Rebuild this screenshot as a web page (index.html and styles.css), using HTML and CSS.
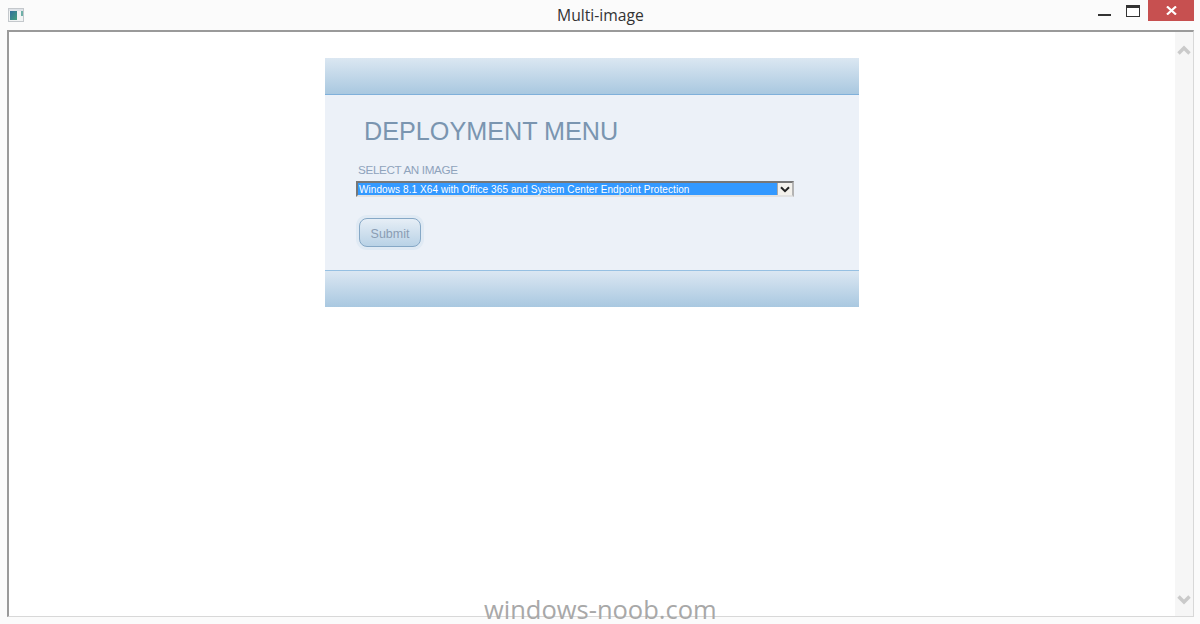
FILE: index.html
```html
<!DOCTYPE html>
<html lang="en">
<head>
<meta charset="utf-8">
<title>Multi-image</title>
<link rel="stylesheet" href="styles.css">
</head>
<body>
<div class="window">
  <header class="titlebar">
    <svg class="app-icon" width="16" height="14" viewBox="0 0 16 14">
      <rect x="0.5" y="0.5" width="15" height="13" fill="#f2f4f4" stroke="#c4c8cc"/>
      <rect x="1" y="1" width="14" height="2" fill="#dfe3e8"/>
      <defs><linearGradient id="ic" x1="0" y1="0" x2="1" y2="1"><stop offset="0" stop-color="#2f6f9c"/><stop offset="1" stop-color="#45a07e"/></linearGradient></defs>
      <rect x="2" y="3" width="7" height="9" fill="url(#ic)"/>
      <rect x="13" y="3" width="2" height="5" fill="#6fb0a8"/>
    </svg>
    <span class="title">Multi-image</span>
    <div class="controls">
      <svg class="ctl-min" width="13" height="2" viewBox="0 0 13 2"><rect width="13" height="2" fill="#333"/></svg>
      <svg class="ctl-max" width="14" height="12" viewBox="0 0 14 12"><rect x="0.5" y="0.5" width="13" height="11" fill="#fff" stroke="#333"/><rect x="0" y="0" width="14" height="3" fill="#333"/></svg>
      <div class="ctl-close">
        <svg width="11" height="9" viewBox="0 0 11 9"><path d="M1 0.5 L10 8.5 M10 0.5 L1 8.5" stroke="#fff" stroke-width="2.2" fill="none"/></svg>
      </div>
    </div>
  </header>
  <div class="frame">
    <main class="content">
      <section class="card">
        <div class="band band-top"></div>
        <div class="card-body">
          <h1 class="heading">DEPLOYMENT MENU</h1>
          <div class="label">SELECT AN IMAGE</div>
          <div class="select">
            <span class="select-value">Windows 8.1 X64 with Office 365 and System Center Endpoint Protection</span>
            <span class="select-arrow">
              <svg width="10" height="7" viewBox="0 0 10 7"><path d="M1 1.2 L5 5.2 L9 1.2" stroke="#222" stroke-width="2" fill="none"/></svg>
            </span>
          </div>
          <div class="button-ring"><div class="button">Submit</div></div>
        </div>
        <div class="band band-bottom"></div>
      </section>
    </main>
    <aside class="scrollbar">
      <svg width="14" height="10" viewBox="0 0 14 10"><path d="M1.5 8.5 L7 3 L12.5 8.5" stroke="#cacaca" stroke-width="3.4" fill="none"/></svg>
      <svg width="14" height="10" viewBox="0 0 14 10"><path d="M1.5 1.5 L7 7 L12.5 1.5" stroke="#cacaca" stroke-width="3.4" fill="none"/></svg>
    </aside>
  </div>
  <div class="watermark">windows-noob.com</div>
</div>
</body>
</html>
```
FILE: styles.css
```css
html, body {
  margin: 0;
  padding: 0;
}
body {
  width: 1200px;
  height: 624px;
  overflow: hidden;
  background: #fbfbfb;
  font-family: "Liberation Sans", Arial, sans-serif;
}
.window {
  position: relative;
  width: 1200px;
  height: 624px;
  display: flex;
  flex-direction: column;
}
.titlebar {
  position: relative;
  height: 30px;
  flex: none;
  display: flex;
  align-items: flex-start;
  justify-content: center;
}
.app-icon {
  position: absolute;
  left: 8px;
  top: 8px;
}
.title {
  font-family: "Open Sans", "Noto Sans", sans-serif;
  font-size: 15.7px;
  line-height: 20px;
  margin-top: 5px;
  margin-left: 1px;
  color: #333;
}
.controls {
  position: absolute;
  right: 6px;
  top: 0;
  display: flex;
  align-items: flex-start;
}
.ctl-min {
  margin-top: 14px;
  margin-right: 15px;
}
.ctl-max {
  margin-top: 5px;
  margin-right: 8px;
}
.ctl-close {
  width: 46px;
  height: 21px;
  background: #c75050;
  display: flex;
  align-items: center;
  justify-content: center;
}
.frame {
  margin-left: 7px;
  margin-right: 6px;
  height: 587px;
  flex: none;
  display: flex;
  background: #fff;
  border-left: 2px solid #9a9a9a;
  border-top: 2px solid #9a9a9a;
  border-right: 1px solid #d8d8d8;
  border-bottom: 1px solid #d8d8d8;
  box-sizing: border-box;
}
.content {
  flex: 1;
  padding: 26px 0 0 316px;
}
.scrollbar {
  width: 18px;
  background: #f6f6f6;
  display: flex;
  flex-direction: column;
  justify-content: space-between;
  align-items: center;
  padding: 13px 0 11px;
  box-sizing: border-box;
}
.card {
  width: 534px;
  height: 249px;
  display: flex;
  flex-direction: column;
  background: #ecf1f8;
}
.band {
  flex: none;
  background: linear-gradient(#dbe7f2, #a9c8e0);
}
.band-top {
  border-bottom: 1px solid #7fb0da;
  height: 36px;
}
.band-bottom {
  border-top: 1px solid #96c0e2;
  height: 36px;
}
.card-body {
  flex: 1;
  padding: 21px 0 0 31px;
  box-sizing: border-box;
}
.heading {
  margin: 0 0 0 8px;
  font-size: 25.2px;
  font-weight: normal;
  line-height: 30px;
  color: #7a95b0;
}
.label {
  margin: 17px 0 0 2px;
  font-size: 11.7px;
  line-height: 14px;
  letter-spacing: -0.35px;
  color: #8fa3bc;
}
.select {
  margin-top: 4px;
  width: 438px;
  height: 16px;
  display: flex;
  box-sizing: border-box;
  background: #f0f0f0;
  border-left: 2px solid #777;
  border-top: 2px solid #777;
  border-right: 2px solid #b4b4b4;
  border-bottom: 2px solid #e2e2e2;
}
.select-value {
  flex: 1;
  overflow: hidden;
  background: #3399ff;
  color: #fff;
  font-size: 10px;
  line-height: 14px;
  padding-left: 1px;
  letter-spacing: 0.08px;
  white-space: nowrap;
}
.select-arrow {
  width: 15px;
  display: flex;
  align-items: center;
  justify-content: center;
  background: #f3f1ec;
  border-left: 1px solid #aaa;
  box-sizing: border-box;
}
.button-ring {
  margin-top: 18px;
  width: 68px;
  height: 35px;
  padding: 3px;
  box-sizing: border-box;
  border-radius: 11px;
  background: #e0eaf4;
}
.button {
  height: 29px;
  box-sizing: border-box;
  border: 1px solid #86a8c6;
  border-radius: 8px;
  background: linear-gradient(#e6eef6, #b9d2e6);
  color: #8a9db4;
  font-size: 12.5px;
  line-height: 30px;
  text-align: center;
}
.watermark {
  position: absolute;
  left: 484px;
  top: 590px;
  font-family: "Open Sans", "Noto Sans", sans-serif;
  font-size: 25.5px;
  line-height: 38px;
  color: #a8a8a8;
  white-space: nowrap;
}
```
